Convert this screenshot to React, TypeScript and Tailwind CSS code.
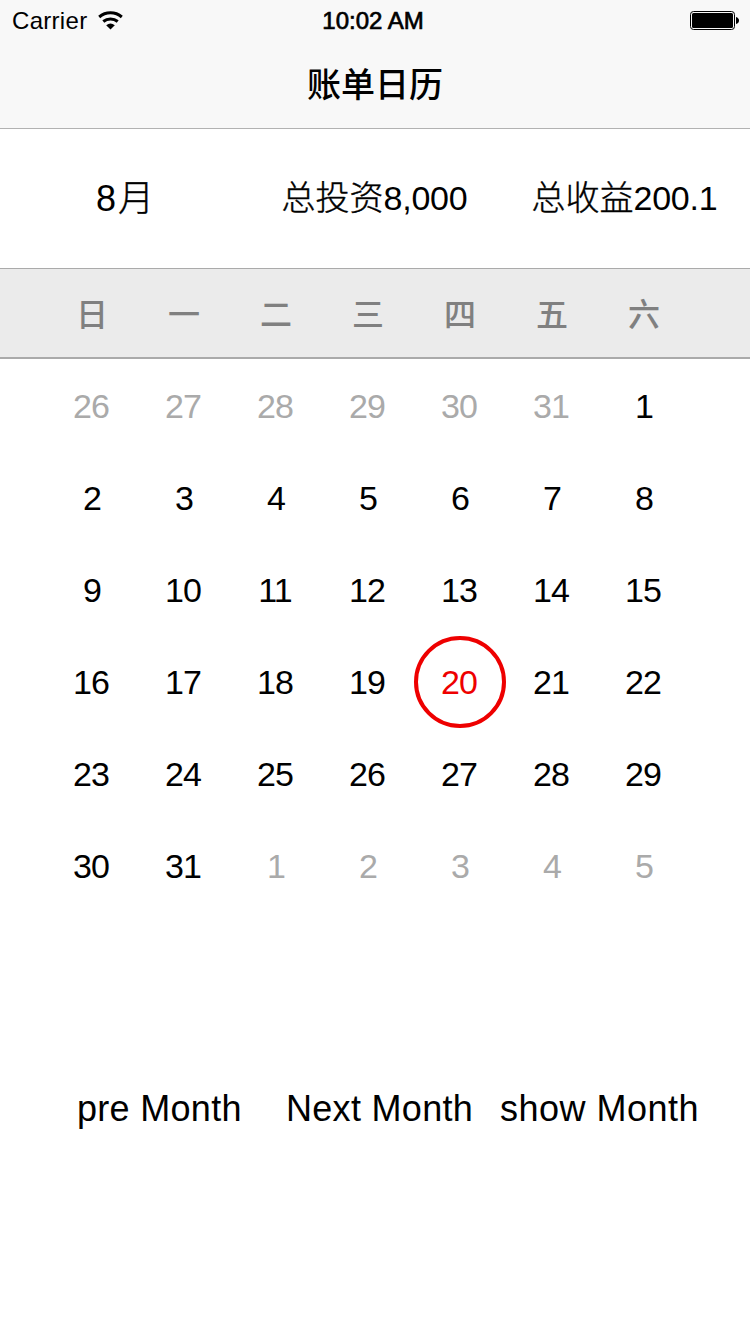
const sans = "font-['Liberation_Sans','Noto_Sans_CJK_SC',sans-serif]";

const weekdays = ["日", "一", "二", "三", "四", "五", "六"];
const days = [
  26, 27, 28, 29, 30, 31, 1, 2, 3, 4, 5, 6, 7, 8, 9, 10, 11, 12, 13, 14, 15, 16,
  17, 18, 19, 20, 21, 22, 23, 24, 25, 26, 27, 28, 29, 30, 31, 1, 2, 3, 4, 5,
];

function dayColor(index: number) {
  if (index === 25) return "border-[#ee0000] text-[#ee0000]";
  if (index < 6 || index > 36) return "border-transparent text-[#aaaaaa]";
  return "border-transparent text-black";
}

function StatusBar() {
  return (
    <div className="grid h-10 grid-cols-[1fr_auto_1fr] items-center pt-px pr-[11px] pl-3">
      <div className="flex items-center gap-[11px]">
        <span className="text-[24px] leading-[38px] tracking-[0.3px]">Carrier</span>
        <svg width="25" height="19" viewBox="0 0 25 19" fill="none" stroke="black" strokeWidth="3">
          <path d="M1.2 6a17.500 17.500 0 0 1 22.6 0" />
          <path d="M5.300 10.500a11.200 11.200 0 0 1 14.400 0" />
          <path d="M12.500 18.500 8.200 14.200q4.300-3.500 8.600 0z" fill="black" stroke="none" />
        </svg>
      </div>
      <div className="pr-[5px] text-[24px] leading-[38px] [-webkit-text-stroke:0.7px_black]">10:02 AM</div>
      <svg className="justify-self-end" width="49" height="19" viewBox="0 0 49 19">
        <rect x="0.5" y="0.5" width="44" height="18" rx="3" fill="none" stroke="black" />
        <rect x="2" y="2" width="41" height="15" rx="1.500" />
        <path d="M46 6q3 1 3 3.500t-3 3.500z" />
      </svg>
    </div>
  );
}

function Summary({ label, value }: { label: string; value: string }) {
  return (
    <div className="w-[250px] pr-px text-center">
      <span className="[-webkit-text-stroke:0.4px_black]">{label}</span>
      <span className="tracking-[-0.2px]">{value}</span>
    </div>
  );
}

export default function App() {
  return (
    <div className={`flex h-[1334px] w-[750px] flex-col bg-white text-black ${sans}`}>
      <header className="h-[129px] border-b border-[#b2b2b2] bg-[#f8f8f8]">
        <StatusBar />
        <h1 className="pt-px text-center text-[34px] leading-[88px] font-medium">账单日历</h1>
      </header>

      <section className="flex h-[139px] items-center font-light whitespace-nowrap text-[34px]">
        <div className="w-[250px] text-center text-[36px]">
          <span className="tracking-[2px]">8</span>
          <span className="[-webkit-text-stroke:0.4px_black]">月</span>
        </div>
        <Summary label="总投资" value="8,000" />
        <Summary label="总收益" value="200.1" />
      </section>

      <div className="grid h-[91px] grid-cols-[repeat(7,92px)] items-center border-t border-b-2 border-[#aaaaaa] bg-[#ebebeb] pt-[3px] pl-[46px] text-center text-[32px] font-medium text-[#808080]">
        {weekdays.map((day) => (
          <span key={day}>{day}</span>
        ))}
      </div>

      <main className="grid grid-cols-[repeat(7,92px)] pt-px pl-[46px] text-[34px] tracking-[-0.8px]">
        {days.map((day, i) => (
          <div
            key={i}
            className={`flex size-[92px] items-center justify-center rounded-full border-4 ${day > 9 ? "pr-[2px]" : ""} ${dayColor(i)}`}
          >
            {day}
          </div>
        ))}
      </main>

      <footer className="mt-[170px] flex pl-[77px] text-[36px] tracking-[0.3px] whitespace-nowrap">
        <button className="w-[209px] text-left">pre Month</button>
        <button className="w-[214px] text-left">Next Month</button>
        <button className="tracking-[0.5px]">show Month</button>
      </footer>
    </div>
  );
}
